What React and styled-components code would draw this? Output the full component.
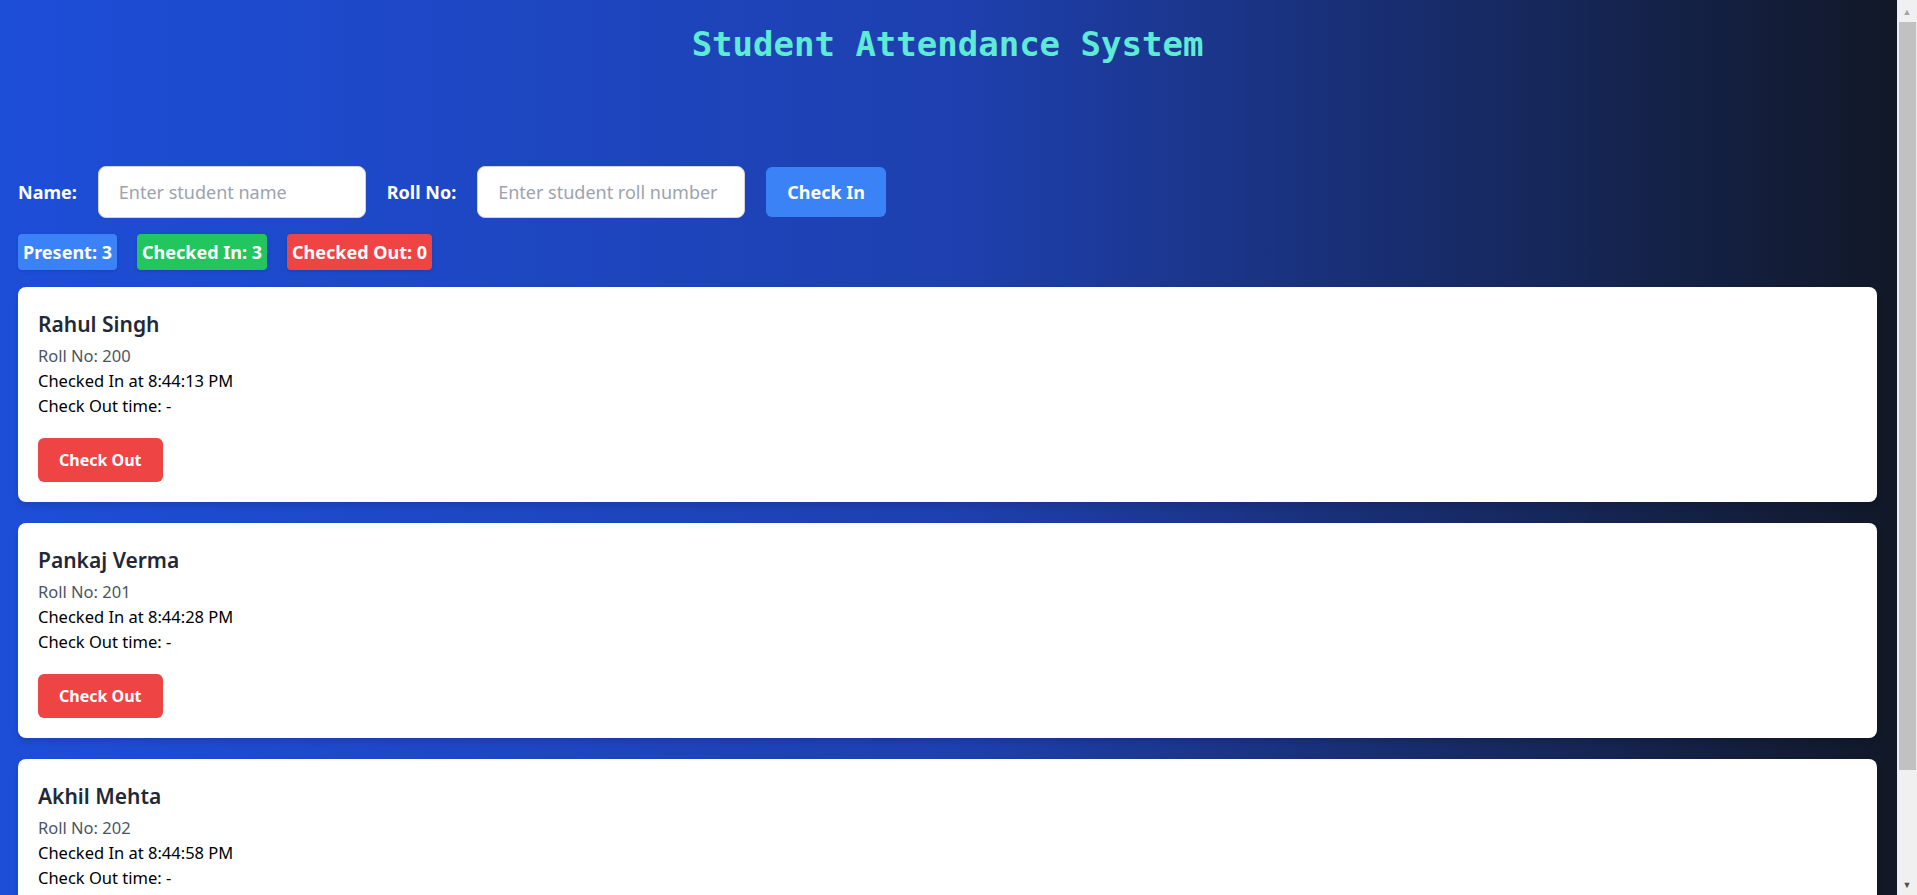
import React, { useState } from 'react';
import styled, { createGlobalStyle } from 'styled-components';

const GlobalStyle = createGlobalStyle`
  html, body {
    margin: 0;
    padding: 0;
  }
  body {
    font-family: "Noto Sans", "Open Sans", sans-serif;
    background: #111827;
  }
  * {
    box-sizing: border-box;
  }
`;

const Page = styled.div`
  min-height: 100vh;
  padding: 20px 40px 20px 18px;
  background: linear-gradient(to right, #1d4ed8 0%, #1e40af 50%, #111827 98.9%);
`;

// the window's scrollbar, drawn over the right edge
const ScrollTrack = styled.div`
  position: fixed;
  top: 0;
  right: 0;
  bottom: 0;
  width: 20px;
  display: flex;
  flex-direction: column;
  background: #f0f0f0;
`;

const ScrollArrow = styled.div`
  height: 22px;
  display: flex;
  align-items: center;
  justify-content: center;
  margin-top: ${(p) => (p.$down ? 'auto' : '0')};
  color: ${(p) => (p.$down ? '#505050' : '#a3a3a3')};
  font-size: 9px;
  line-height: 1;
`;

const ScrollThumb = styled.div`
  width: 17px;
  margin-left: 2px;
  height: 748px;
  background: #c1c1c1;
`;

const Title = styled.h1`
  margin: 4px 0 102px;
  text-align: center;
  font-family: "DejaVu Sans Mono", "Liberation Mono", monospace;
  font-size: 34px;
  line-height: 40px;
  font-weight: 700;
  color: #5eead4;
`;

const Form = styled.div`
  display: flex;
  align-items: center;
  gap: 21px;
`;

const Label = styled.label`
  font-size: 18px;
  font-weight: 700;
  color: #ffffff;
`;

const Input = styled.input`
  width: 268px;
  height: 52px;
  padding: 0 20px;
  border: 1px solid #d1d5db;
  border-radius: 8px;
  background: #ffffff;
  font-family: inherit;
  font-size: 18px;
  color: #111827;
  outline: none;

  &::placeholder {
    color: #9ca3af;
  }
`;

const Button = styled.button`
  border: none;
  border-radius: 6px;
  background: ${(p) => (p.$danger ? '#ef4444' : '#3b82f6')};
  color: #ffffff;
  font-family: inherit;
  font-size: ${(p) => (p.$danger ? '16px' : '18px')};
  font-weight: 700;
  line-height: ${(p) => (p.$danger ? '24px' : '28px')};
  padding: ${(p) => (p.$danger ? '10px 21px' : '11px 21px')};
  cursor: pointer;
`;

const Stats = styled.div`
  display: flex;
  gap: 20px;
  margin: 16px 0 17px;
`;

const Badge = styled.span`
  padding: 4px 5px;
  border-radius: 4px;
  background: ${(p) => p.$color};
  color: #ffffff;
  font-size: 18px;
  font-weight: 700;
  line-height: 28px;
  box-shadow: 0 1px 3px rgba(0, 0, 0, 0.15);
`;

const List = styled.div`
  display: flex;
  flex-direction: column;
  gap: 21px;
`;

const Card = styled.div`
  padding: 22px 20px 20px;
  border-radius: 8px;
  background: #ffffff;
  box-shadow: 0 4px 6px rgba(0, 0, 0, 0.12);
`;

const Name = styled.h2`
  margin: 0 0 4px;
  font-size: 21px;
  line-height: 30px;
  font-weight: 600;
  color: #1f2937;
`;

const Line = styled.p`
  margin: 0;
  font-size: 16.5px;
  line-height: 25px;
  color: ${(p) => (p.$muted ? '#4b5563' : '#000000')};
`;

const Actions = styled.div`
  margin-top: 20px;
`;

const students = [
  { name: 'Rahul Singh', roll: 200, checkIn: '8:44:13 PM' },
  { name: 'Pankaj Verma', roll: 201, checkIn: '8:44:28 PM' },
  { name: 'Akhil Mehta', roll: 202, checkIn: '8:44:58 PM' },
];

export default function App() {
  const [name, setName] = useState('');
  const [roll, setRoll] = useState('');

  return (
    <Page>
      <GlobalStyle />
      <Title>Student Attendance System</Title>

      <Form>
        <Label>Name:</Label>
        <Input
          placeholder="Enter student name"
          value={name}
          onChange={(e) => setName(e.target.value)}
        />
        <Label>Roll No:</Label>
        <Input
          placeholder="Enter student roll number"
          value={roll}
          onChange={(e) => setRoll(e.target.value)}
        />
        <Button>Check In</Button>
      </Form>

      <Stats>
        <Badge $color="#3b82f6">Present: 3</Badge>
        <Badge $color="#22c55e">Checked In: 3</Badge>
        <Badge $color="#ef4444">Checked Out: 0</Badge>
      </Stats>

      <List>
        {students.map((s) => (
          <Card key={s.roll}>
            <Name>{s.name}</Name>
            <Line $muted>Roll No: {s.roll}</Line>
            <Line>Checked In at {s.checkIn}</Line>
            <Line>Check Out time: -</Line>
            <Actions>
              <Button $danger>Check Out</Button>
            </Actions>
          </Card>
        ))}
      </List>

      <ScrollTrack>
        <ScrollArrow>▲</ScrollArrow>
        <ScrollThumb />
        <ScrollArrow $down>▼</ScrollArrow>
      </ScrollTrack>
    </Page>
  );
}
